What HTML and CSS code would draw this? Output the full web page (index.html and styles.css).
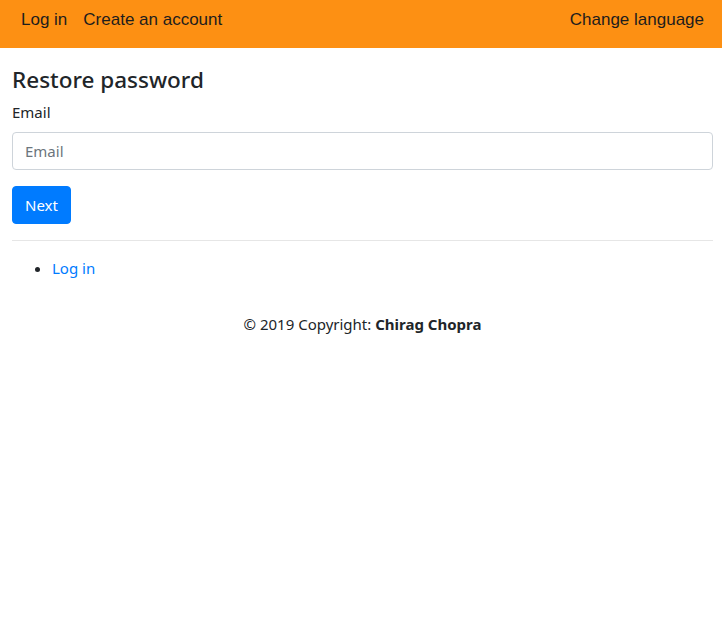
FILE: index.html
```html
<!DOCTYPE html>
<html>
<head>
<meta charset="utf-8">
<link rel="stylesheet" href="styles.css">
</head>
<body>
<nav class="navbar">
  <div class="nav-left">
    <a class="nav-link" href="#">Log in</a>
    <a class="nav-link" href="#">Create an account</a>
  </div>
  <a class="nav-link" href="#">Change language</a>
</nav>
<main class="content">
  <h4 class="title">Restore password</h4>
  <form class="form">
    <label class="label" for="email">Email</label>
    <input class="input" id="email" type="text" placeholder="Email">
    <button class="btn" type="button">Next</button>
  </form>
  <hr class="divider">
  <ul class="links">
    <li><a href="#" class="link">Log in</a></li>
  </ul>
  <footer class="footer">© 2019 Copyright: <b>Chirag Chopra</b></footer>
</main>
</body>
</html>
```

FILE: styles.css
```css
* { box-sizing: border-box; }
body {
  margin: 0;
  font-family: "Noto Sans", "Open Sans", sans-serif;
  font-size: 16px;
  line-height: 1.5;
  color: #212529;
  background: #fff;
}
.navbar {
  background: #fd9013;
  height: 48px;
  display: flex;
  align-items: flex-start;
  justify-content: space-between;
  padding: 0 18px 0 13px;
  font-family: "Liberation Sans", Arial, sans-serif;
  font-size: 17px;
}
.nav-left { display: flex; gap: 0; }
.nav-link {
  color: #1d1d1d;
  text-decoration: none;
  padding: 0 8px;
  line-height: 40px;
}
.nav-link:last-child { padding-right: 0; }
.content {
  padding: 18px 9px 0 12px;
}
.title {
  margin: 0 0 8px;
  font-size: 22.5px;
  font-weight: 500;
  line-height: 1.2;
}
.form { display: flex; flex-direction: column; align-items: flex-start; }
.label {
  font-size: 15px;
  margin-bottom: 8px;
}
.input {
  width: 100%;
  height: 38px;
  border: 1px solid #ced4da;
  border-radius: 4px;
  padding: 6px 12px;
  font-family: inherit;
  font-size: 15px;
  color: #495057;
  margin-bottom: 16px;
}
.input::placeholder { color: #6c757d; }
.btn {
  background: #007bff;
  color: #fff;
  border: 1px solid #007bff;
  border-radius: 4px;
  height: 38px;
  padding: 0 12px;
  font-family: inherit;
  font-size: 15px;
}
.divider {
  margin: 16px 0;
  border: 0;
  border-top: 1px solid #e6e6e6;
}
.links {
  margin: 0 0 16px;
  padding-left: 40px;
  font-size: 15px;
}
.link { color: #007bff; text-decoration: none; }
.footer {
  text-align: center;
  padding: 18px 0;
  font-size: 15px;
}
```
